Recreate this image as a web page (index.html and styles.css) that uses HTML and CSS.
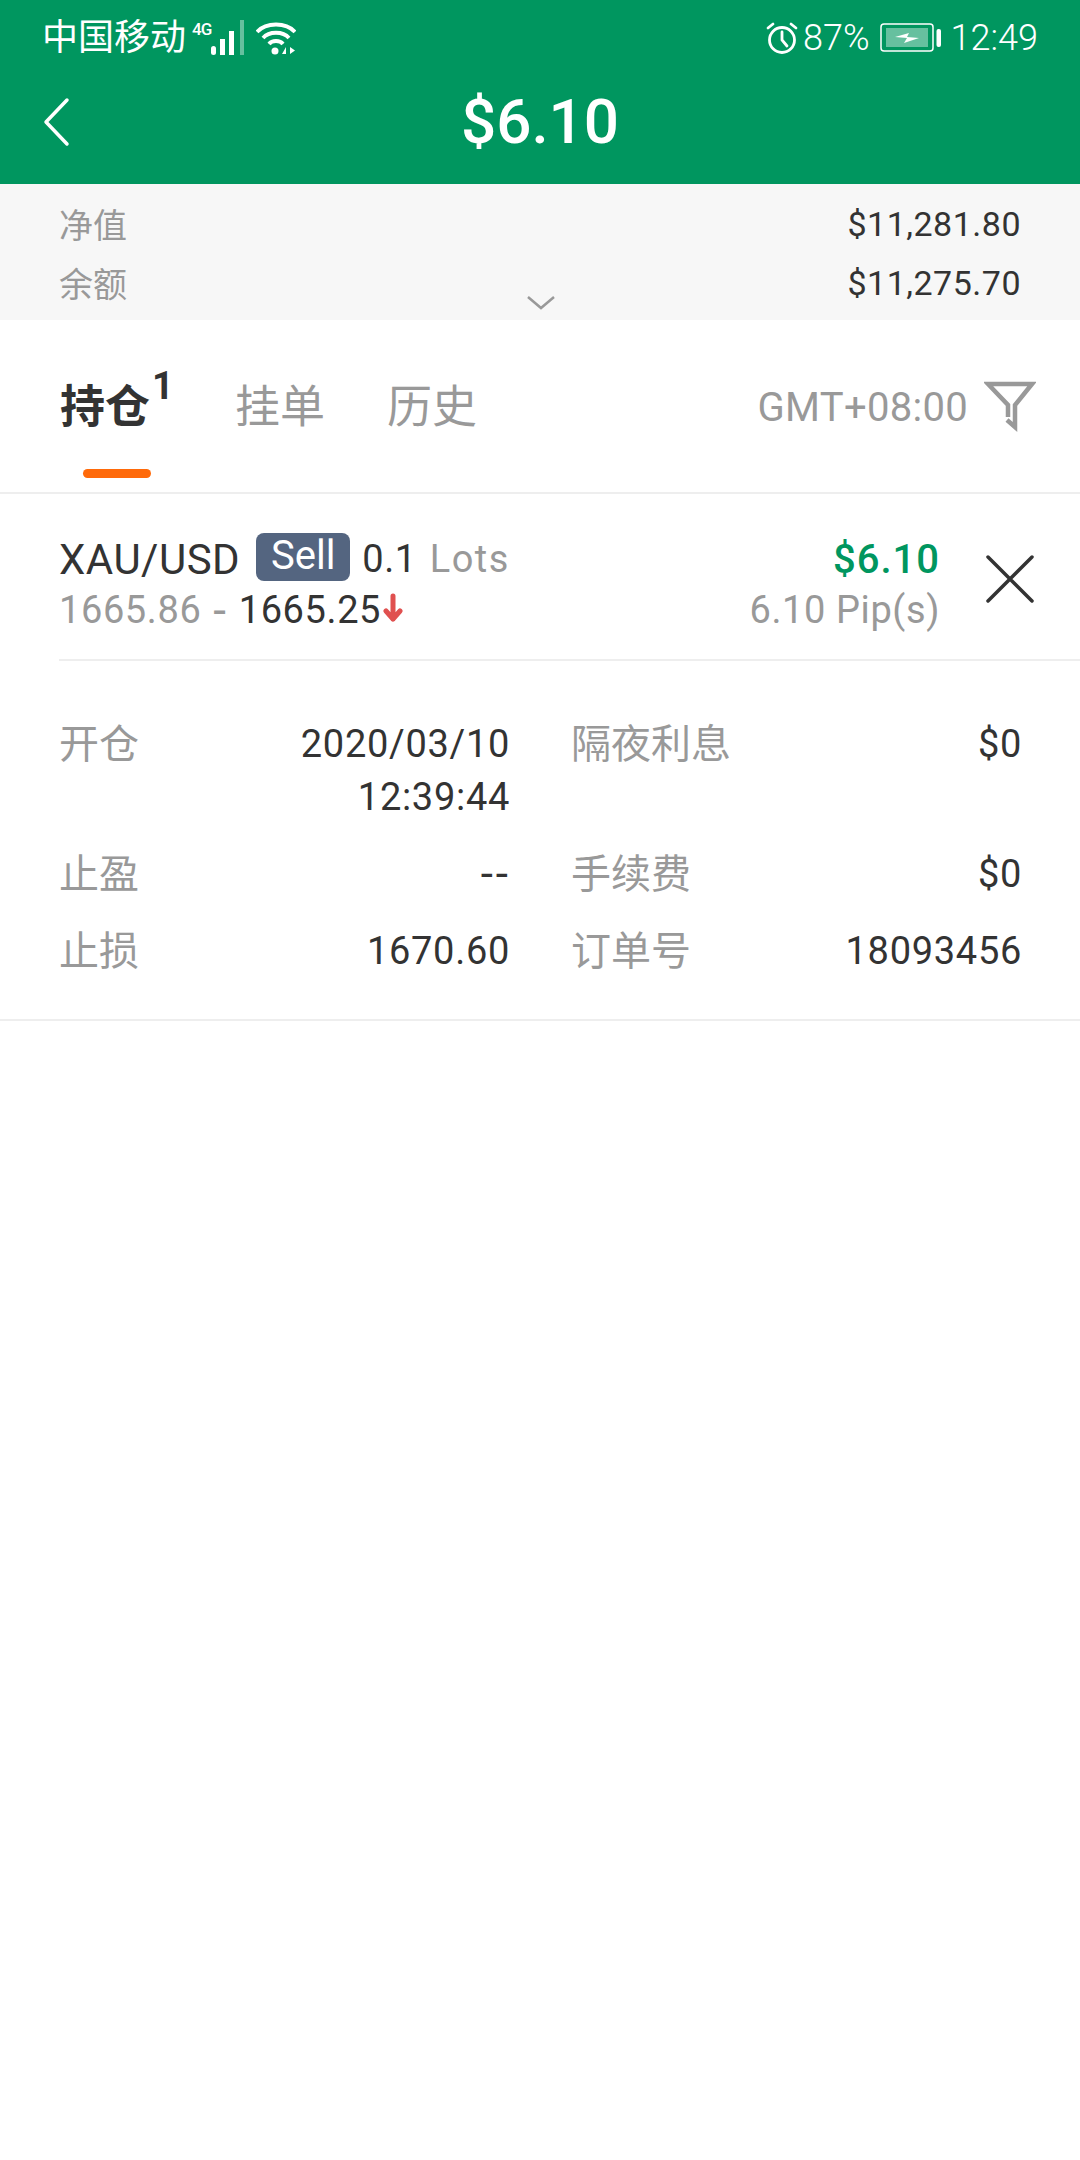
FILE: index.html
```html
<!DOCTYPE html>
<html lang="zh-CN">
<head>
<meta charset="utf-8">
<title>$6.10</title>
<link rel="stylesheet" href="styles.css">
</head>
<body>
<div class="page">
  <header class="header">
    <div class="status">
      <div class="status-left">
        <span class="carrier">中国移动</span>
        <span class="net">4G</span>
        <svg class="signal" viewBox="0 0 34 36" width="34" height="36"><g fill="#fff"><rect x="0" y="26" width="5" height="9" rx="2.500"/><rect x="9" y="19" width="5" height="16"/><rect x="18" y="11" width="5" height="24"/></g><rect x="29" y="0" width="4" height="35" fill="#fff" opacity=".4"/></svg>
        <svg class="wifi" viewBox="0 0 40 34" width="40" height="34"><g fill="none" stroke="#fff" stroke-width="3.800"><path d="M1 11C10 1 30 1 39 11"/><path d="M7 17C13 10 27 10 33 17"/><path d="M13 23C16 19 24 19 27 23"/></g><circle cx="19" cy="30" r="3.500" fill="#fff"/><path d="M30 33l0-7-4 7zM34 26v7l5-3.500z" fill="#fff"/></svg>
      </div>
      <div class="status-right">
        <svg class="alarm" viewBox="0 0 32 34" width="32" height="34"><g fill="none" stroke="#fff" stroke-width="2.800" stroke-linecap="round"><circle cx="16" cy="19" r="12.500"/><path d="M16 11v8l5 6"/><path d="M2 7l5-4M30 7l-5-4"/></g></svg>
        <span class="pct">87%</span>
        <svg class="battery" viewBox="0 0 62 30" width="62" height="30"><rect x="1" y="1" width="52" height="27" rx="3" fill="none" stroke="#fff" stroke-width="1.500"/><rect x="6" y="5" width="42" height="19" fill="#fff" opacity=".4"/><path d="M15 14l14-4-2 4 12 1-15 5 3-5z" fill="#fff"/><rect x="56.500" y="6" width="4.500" height="18" rx="2" fill="#fff"/></svg>
        <span class="clock">12:49</span>
      </div>
    </div>
    <div class="nav">
      <svg class="back" viewBox="0 0 28 50" width="28" height="50"><path d="M25 3L4 25l21 22" fill="none" stroke="#fff" stroke-width="3.500" stroke-linecap="round" stroke-linejoin="round"/></svg>
      <h1 class="title">$6.10</h1>
    </div>
  </header>

  <section class="summary">
    <div class="summary-row"><span class="muted">净值</span><span class="dark amount">$11,281.80</span></div>
    <div class="summary-row"><span class="muted">余额</span><span class="dark amount">$11,275.70</span></div>
    <svg class="chevron" viewBox="0 0 28 14" width="28" height="14"><path d="M1 1l13 11L27 1" fill="none" stroke="#999" stroke-width="2.500"/></svg>
  </section>

  <nav class="tabs">
    <div class="tab tab-active">持仓<sup class="count">1</sup></div>
    <div class="tab">挂单</div>
    <div class="tab">历史</div>
    <div class="tabs-right">
      <span class="tz">GMT+08:00</span>
      <svg class="filter" viewBox="0 0 52 52" width="52" height="52"><path d="M24 37V25L4 4h44L31 25v22l-8-7" fill="none" stroke="#999" stroke-width="4.500" stroke-linejoin="miter"/></svg>
    </div>
  </nav>

  <section class="position">
    <div class="position-main">
      <div class="position-left">
        <div class="line">
          <span class="symbol">XAU/USD</span>
          <span class="badge">Sell</span>
          <span class="dark din">0.1</span>
          <span class="muted din lots">Lots</span>
        </div>
        <div class="line line-prices">
          <span class="muted din">1665.86</span>
          <span class="muted din dash">-</span>
          <span class="dark din">1665.25</span>
          <svg class="down" viewBox="0 0 20 30" width="20" height="30"><path d="M10 3v23M3 18l7 8 7-8" fill="none" stroke="#e0504f" stroke-width="5" stroke-linecap="round" stroke-linejoin="round"/></svg>
        </div>
      </div>
      <div class="position-right">
        <div class="line profit din">$6.10</div>
        <div class="line line-prices muted din pips">6.10 Pip(s)</div>
      </div>
      <svg class="close" viewBox="0 0 48 48" width="48" height="48"><path d="M2 2l44 44M46 2L2 46" fill="none" stroke="#333" stroke-width="3.500" stroke-linecap="round"/></svg>
    </div>
    <div class="details">
      <div class="detail"><span class="muted">开仓</span><span class="dark din value">2020/03/10<br>12:39:44</span></div>
      <div class="detail"><span class="muted">隔夜利息</span><span class="dark din value">$0</span></div>
      <div class="detail"><span class="muted">止盈</span><span class="dark din value empty">--</span></div>
      <div class="detail"><span class="muted">手续费</span><span class="dark din value">$0</span></div>
      <div class="detail"><span class="muted">止损</span><span class="dark din value">1670.60</span></div>
      <div class="detail"><span class="muted">订单号</span><span class="dark din value">18093456</span></div>
    </div>
  </section>
</div>
</body>
</html>
```
FILE: styles.css
```css
* { box-sizing: border-box; }
html, body { margin: 0; padding: 0; background: #fff; }
body { font-family: Roboto, "Noto Sans CJK SC", sans-serif; color: #333; }
.page { width: 1080px; height: 2160px; background: #fff; overflow: hidden; }

.header { height: 184px; background: #00965f; color: #fff; display: flex; flex-direction: column; }
.status { height: 74px; padding: 2px 42px 0 42px; display: flex; justify-content: space-between; align-items: center; }
.status-left, .status-right { display: flex; align-items: center; }
.carrier { font-size: 36px; line-height: 40px; }
.net { font-size: 17px; font-weight: 500; line-height: 16px; letter-spacing: -1px; align-self: flex-start; margin: 3px 0 0 6px; }
.wifi { margin-left: 11px; }
.alarm { margin-right: 5px; }
.pct, .clock { font-size: 36px; font-weight: 300; line-height: 40px; }
.battery { margin: 0 9px 0 10px; }
.nav { height: 96px; padding: 0 0 0 42px; position: relative; display: flex; align-items: center; }
.back { flex: none; }
.title { position: absolute; left: 0; right: 0; top: 14px; margin: 0; text-align: center; font-size: 62px; line-height: 68px; font-weight: 500; }

.summary { position: relative; height: 136px; background: #f7f7f7; padding: 10px 59px 0; }
.summary-row { display: flex; justify-content: space-between; align-items: center; height: 59px; font-size: 34px; }
.amount { letter-spacing: .5px; }
.chevron { position: absolute; left: 527px; top: 112px; }
.muted { color: #999; }
.dark { color: #333; }

.tabs { height: 174px; border-bottom: 2px solid #eee; padding: 0 44px 0 60px; display: flex; align-items: center; }
.tab { position: relative; font-size: 45px; line-height: 60px; color: #999; margin-right: 62px; margin-top: 4px; }
.tab-active { color: #333; font-weight: 700; margin-right: 85px; }
.tab-active::after { content: ""; position: absolute; left: 23px; top: 91px; width: 68px; height: 9px; border-radius: 5px; background: #ff6a0a; }
.count { position: absolute; left: 92px; top: -14px; font-size: 38px; line-height: 44px; font-weight: 700; vertical-align: baseline; }
.tabs-right { margin-left: auto; display: flex; align-items: center; }
.tz { font-size: 40px; line-height: 50px; color: #999; letter-spacing: .3px; margin-top: 3px; }
.filter { margin-left: 16px; margin-top: -1px; }

.position { border-bottom: 2px solid #eee; padding-left: 59px; }
.position-main { position: relative; height: 167px; border-bottom: 2px solid #eee; padding: 40px 47px 0 0; display: flex; justify-content: space-between; }
.line { display: flex; align-items: center; height: 50px; font-size: 38px; }
.line-prices { height: 52px; }
.din { letter-spacing: .6px; }
.lots { letter-spacing: 1.5px; }
.pips { letter-spacing: .6px; }
.symbol { font-size: 42px; letter-spacing: .5px; }
.badge { margin: 0 12px 0 16px; width: 94px; height: 48px; border-radius: 8px; background: #546580; color: #fff; font-size: 40px; line-height: 46px; text-align: center; transform: translateY(-2px); }
.line .din + .din { margin-left: 13px; }
.line-prices .din + .din { margin-left: 12px; }
.dash { font-size: 46px; line-height: 40px; }
.down { margin: 0 0 4px 2px; }
.position-right { text-align: right; margin-right: 93px; }
.position-right .line { justify-content: flex-end; }
.profit { color: #00965f; font-weight: 500; font-size: 40px; letter-spacing: 1px; }
.close { position: absolute; left: 927px; top: 61px; }

.details { display: grid; grid-template-columns: 451px 451px; column-gap: 61px; row-gap: 24px; padding: 57px 0 41px; font-size: 40px; line-height: 53px; }
.detail { display: flex; justify-content: space-between; align-items: flex-start; }
.value { text-align: right; font-size: 38px; letter-spacing: .7px; }
.empty { font-size: 44px; letter-spacing: 3px; font-weight: 400; margin-right: -1px; }
```
